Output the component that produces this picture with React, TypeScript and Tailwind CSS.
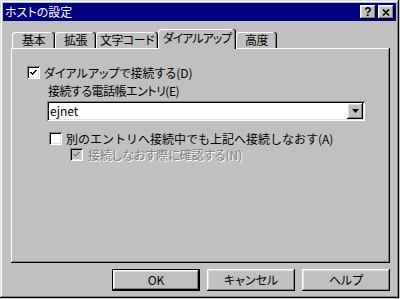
import React from "react";

const font = "font-['Noto_Sans_CJK_JP','Noto_Sans',sans-serif]";
const palt = "[font-feature-settings:'palt'] whitespace-nowrap";

const raised =
  "shadow-[inset_-1px_-1px_#000,inset_1px_1px_#fff,inset_-2px_-2px_#808080,inset_2px_2px_#dfdfdf]";
const sunken =
  "shadow-[inset_1px_1px_#808080,inset_-1px_-1px_#fff,inset_2px_2px_#000,inset_-2px_-2px_#dfdfdf]";

const Check = ({ color = "#000" }: { color?: string }) => (
  <svg width="9" height="9" viewBox="0 0 9 9" shapeRendering="crispEdges">
    <polyline points="1.5,4 3.5,6 7.5,2" fill="none" stroke={color} strokeWidth="2" />
  </svg>
);

const CheckBox = ({ checked, disabled }: { checked?: boolean; disabled?: boolean }) => (
  <div
    className={`w-[13px] h-[13px] shrink-0 flex items-center justify-center ${sunken} ${
      disabled ? "bg-[#c0c0c0]" : "bg-white"
    }`}
  >
    {checked && <Check color={disabled ? "#808080" : "#000"} />}
  </div>
);

const Tab = ({ label, width }: { label: string; width: string }) => (
  <div
    className={`${width} h-[16px] flex items-center justify-center rounded-t-[3px] shadow-[inset_-1px_0_#000,inset_-2px_0_#808080,inset_1px_1px_#fff] text-[12px] leading-none text-black tracking-[-0.5px] ${palt}`}
  >
    {label}
  </div>
);

const Button = ({ label, primary }: { label: string; primary?: boolean }) => (
  <div
    className={`w-[88px] h-[22px] flex items-center justify-center text-[12px] text-black ${palt} ${
      primary ? "border border-black" : ""
    }`}
  >
    <div className={`w-full h-full flex items-center justify-center ${raised}`}>{label}</div>
  </div>
);

export default function App() {
  return (
    <div className={`w-[400px] h-[299px] bg-[#c0c0c0] ${font}`}>
      <div className="w-[399px] h-[298px] p-[3px] flex flex-col bg-[#c0c0c0] shadow-[inset_-1px_-1px_#000,inset_1px_1px_#dfdfdf,inset_-2px_-2px_#808080,inset_2px_2px_#fff]">
        {/* Title bar */}
        <div className="h-[18px] bg-[#000080] flex items-center justify-between pl-[2px] pr-[2px]">
          <span className={`text-white text-[12px] leading-none ${palt}`}>ホストの設定</span>
          <div className="flex gap-[2px]">
            <div
              className={`w-[16px] h-[14px] bg-[#c0c0c0] flex items-center justify-center ${raised} text-[12px] font-bold leading-none text-black font-['Liberation_Sans',sans-serif]`}
            >
              ?
            </div>
            <div className={`w-[16px] h-[14px] bg-[#c0c0c0] flex items-center justify-center ${raised}`}>
              <svg width="8" height="7" viewBox="0 0 8 7">
                <path d="M1 0.5L7 6.5M7 0.5L1 6.5" stroke="#000" strokeWidth="1.6" />
              </svg>
            </div>
          </div>
        </div>

        {/* Body */}
        <div className="flex-1 flex flex-col pl-[8px] pr-[6px] pt-[8px]">
          {/* Tabs */}
          <div className="h-[19px] flex items-end pl-[1px]">
            <Tab label="基本" width="w-[43px]" />
            <Tab label="拡張" width="w-[41px]" />
            <Tab label="文字コード" width="w-[62px]" />
            <div
              className={`relative z-10 w-[78px] h-[20px] -mb-[1px] bg-[#c0c0c0] flex justify-center pt-[3px] rounded-t-[3px] shadow-[inset_-1px_0_#000,inset_-2px_0_#808080,inset_1px_1px_#fff] text-[12px] leading-none text-black tracking-[-1px] ${palt}`}
            >
              ダイアルアップ
            </div>
            <Tab label="高度" width="w-[41px]" />
          </div>

          {/* Panel */}
          <div className="h-[215px] flex flex-col pl-[16px] pt-[18px] text-[12px] text-black shadow-[inset_-1px_-1px_#000,inset_1px_1px_#fff,inset_-2px_-2px_#808080]">
            <div className="flex items-center gap-[4px] h-[13px]">
              <CheckBox checked />
              <span className={`leading-none ${palt}`}>ダイアルアップで接続する(D)</span>
            </div>
            <div className={`ml-[21px] mt-[4px] leading-4 tracking-[-0.5px] ${palt}`}>接続する電話帳エントリ(E)</div>
            <div
              className={`ml-[20px] mt-[2px] w-[318px] h-[20px] bg-white flex items-center justify-between pl-[3px] pr-[2px] ${sunken}`}
            >
              <span className="leading-none">ejnet</span>
              <div className={`w-[16px] h-[16px] bg-[#c0c0c0] flex items-center justify-center ${raised}`}>
                <svg width="7" height="4" viewBox="0 0 7 4">
                  <polygon points="0,0 7,0 3.5,4" fill="#000" />
                </svg>
              </div>
            </div>
            <div className="ml-[22px] mt-[11px] flex items-center gap-[4px] h-[13px]">
              <CheckBox />
              <span className="leading-none whitespace-nowrap">別のエントリへ接続中でも上記へ接続しなおす(A)</span>
            </div>
            <div className="ml-[43px] mt-[3px] flex items-center gap-[5px] h-[13px]">
              <CheckBox checked disabled />
              <span className={`leading-none text-[#808080] [text-shadow:1px_1px_0_#fff] ${palt}`}>
                接続しなおす際に確認する(N)
              </span>
            </div>
          </div>

          {/* Buttons */}
          <div className="mt-[6px] flex justify-end gap-[7px]">
            <Button label="OK" primary />
            <Button label="キャンセル" />
            <Button label="ヘルプ" />
          </div>
        </div>
      </div>
    </div>
  );
}
